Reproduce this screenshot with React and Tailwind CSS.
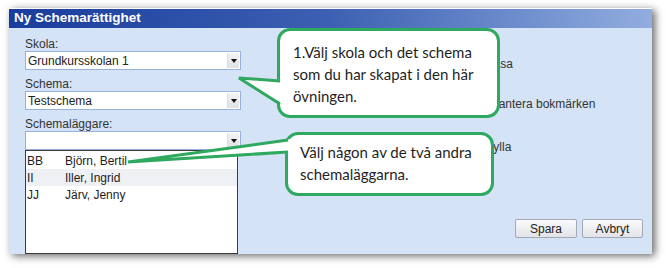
import React from "react";

const people = [
  { code: "BB", name: "Björn, Bertil" },
  { code: "II", name: "Iller, Ingrid", active: true },
  { code: "JJ", name: "Järv, Jenny" },
];

function Combo({ value }) {
  return (
    <div className="flex h-[19px] w-[216px] items-center border border-[#98b0dc] bg-white">
      <span className="flex-1 truncate pl-[2px] text-[12px] leading-none text-[#222]">{value}</span>
      <span className="mr-px flex h-[15px] w-[12px] items-center justify-center border-l border-[#d8dce6] bg-gradient-to-b from-[#f4f4f6] to-[#e0e1e6]">
        <span className="h-0 w-0 border-x-[3px] border-t-[4px] border-x-transparent border-t-[#111]" />
      </span>
    </div>
  );
}

function Callout({ className, children }) {
  return (
    <div
      className={`absolute rounded-[13px] border-[3px] border-[#2ea95f] bg-white text-[15px] leading-[22px] text-[#1f1f1f] ${className}`}
      style={{ fontFamily: "Lato, 'Open Sans', sans-serif" }}
    >
      {children}
    </div>
  );
}

export default function App() {
  return (
    <div
      className="relative h-[268px] w-[666px] overflow-hidden bg-white"
      style={{ fontFamily: "'Liberation Sans', Arial, sans-serif" }}
    >
      {/* WINDOW */}
      <div className="ml-[9px] mt-[8px] flex h-[246px] w-[643px] flex-col border-t border-white bg-[#d5e3f6] shadow-[3px_2px_8px_rgba(0,0,0,0.6)]">
        <div className="flex h-[19px] items-center bg-gradient-to-r from-[#1a3c9c] via-[#3d60b2] to-[#92addf] pl-[5px]">
          <span className="text-[13.5px] font-bold text-white">Ny Schemarättighet</span>
        </div>

        <div className="flex flex-1 pl-[16px] pr-[9px]">
          {/* LEFT COLUMN */}
          <div className="flex w-[216px] flex-col pt-[10px] text-[12px] text-[#333]">
            <p className="h-[13px] leading-[13px]">Skola:</p>
            <Combo value="Grundkursskolan 1" />
            <p className="mt-[8px] h-[13px] leading-[13px]">Schema:</p>
            <Combo value="Testschema" />
            <p className="mt-[8px] h-[13px] leading-[13px]">Schemaläggare:</p>
            <Combo value="" />
            <div className="mr-[3px] flex-1 border border-[#3c3c3c] bg-white pt-[1px]">
              {people.map((p) => (
                <div
                  key={p.code}
                  className={`flex h-[17px] items-center text-[12px] text-[#1e1e1e] ${p.active ? "bg-[#eff0f4]" : ""}`}
                >
                  <span className="w-[39px] pl-px">{p.code}</span>
                  <span>{p.name}</span>
                </div>
              ))}
            </div>
          </div>

          {/* RIGHT COLUMN (partly under the callouts) */}
          <div className="flex flex-1 flex-col items-end pb-[16px]">
            <div className="flex w-full flex-col pl-[248px] pt-[29px] text-[12px] text-[#333]">
              <p className="-ml-[2px] leading-[14px]">Läsa</p>
              <p className="mt-[26px] ml-px leading-[14px]">Hantera bokmärken</p>
              <p className="mt-[29px] -ml-[3px] leading-[14px]">Fylla</p>
            </div>
            <div className="mt-auto flex gap-[5px]">
              <button className="h-[19px] w-[62px] rounded-[2px] border border-[#a4a8b4] bg-gradient-to-b from-[#fbfbfc] to-[#e2e3e8] text-[12px] leading-none text-[#222]">
                Spara
              </button>
              <button className="h-[19px] w-[61px] rounded-[2px] border border-[#a4a8b4] bg-gradient-to-b from-[#fbfbfc] to-[#e2e3e8] text-[12px] leading-none text-[#222]">
                Avbryt
              </button>
            </div>
          </div>
        </div>
      </div>

      {/* CALLOUTS */}
      <Callout className="left-[277px] top-[28px] h-[90px] w-[223px] pl-[13px] pt-[10px]">
        1.Välj skola och det schema
        <br />
        som du har skapat i den här
        <br />
        övningen.
      </Callout>
      <Callout className="left-[285px] top-[132px] h-[64px] w-[209px] pl-[12px] pt-[6px]">
        Välj någon av de två andra
        <br />
        schemaläggarna.
      </Callout>

      <svg className="pointer-events-none absolute left-0 top-0" width="666" height="268">
        <polygon points="239,78 283,80 283,104" fill="#fff" />
        <polyline points="280,81 239,78 280,104" fill="none" stroke="#2ea95f" strokeWidth="3" strokeLinejoin="miter" />
        <polygon points="128,162 291,139 291,153" fill="#fff" />
        <polyline points="288,140 128,162 288,152" fill="none" stroke="#2ea95f" strokeWidth="3" strokeLinejoin="miter" />
      </svg>
    </div>
  );
}
